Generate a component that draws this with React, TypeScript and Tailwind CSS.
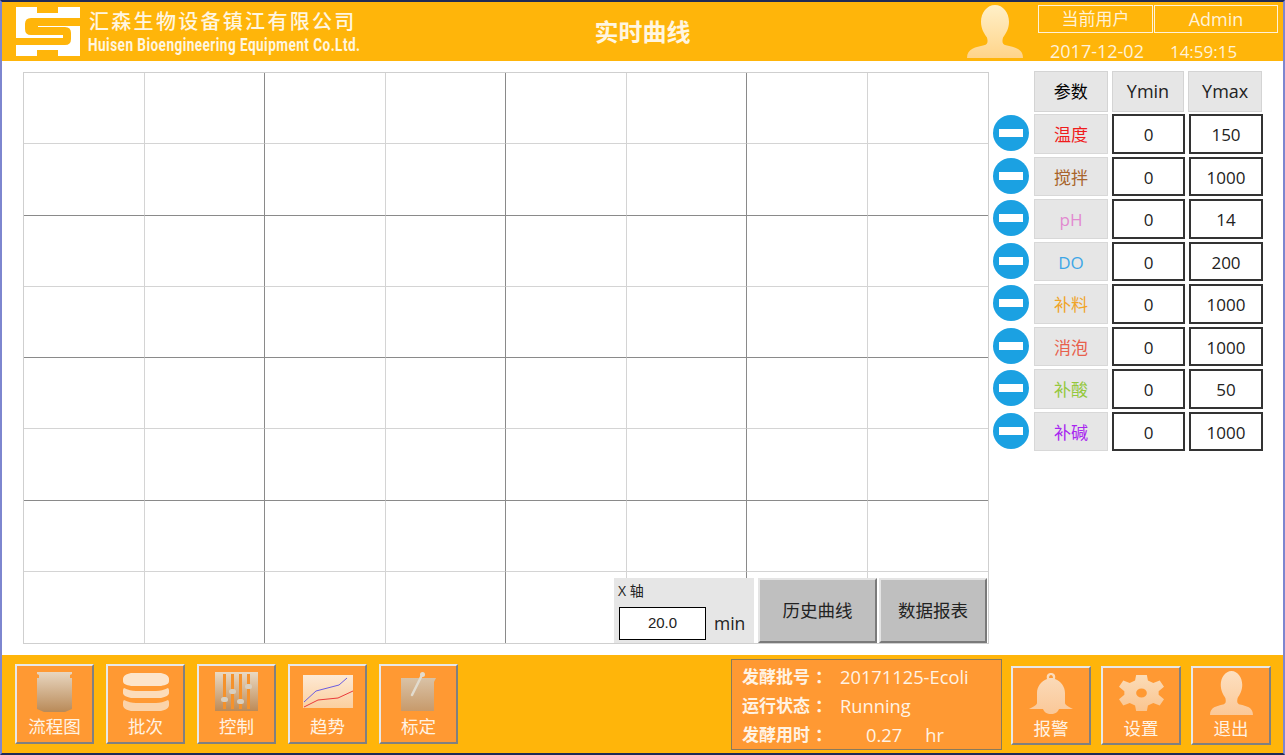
import React from 'react';

const cjk = '"Open Sans","Noto Sans CJK SC",sans-serif';

const params = [
  { name: '温度', color: 'text-[#f01c1c]', ymax: '150' },
  { name: '搅拌', color: 'text-[#a8642a]', ymax: '1000' },
  { name: 'pH', color: 'text-[#e28ad0]', ymax: '14' },
  { name: 'DO', color: 'text-[#3ea6e6]', ymax: '200' },
  { name: '补料', color: 'text-[#f0a428]', ymax: '1000' },
  { name: '消泡', color: 'text-[#e8604c]', ymax: '1000' },
  { name: '补酸', color: 'text-[#94c83c]', ymax: '50' },
  { name: '补碱', color: 'text-[#a824f0]', ymax: '1000' },
];

const MinusIcon = () => (
  <svg width="36" height="36" viewBox="0 0 36 36">
    <circle cx="18" cy="18" r="18" fill="#1ba1e2" />
    <rect x="6" y="14" width="24" height="8" fill="#fff" />
  </svg>
);

const Grad = ({ id, from, to }: { id: string; from: string; to: string }) => (
  <linearGradient id={id} x1="0" y1="0" x2="0" y2="1">
    <stop offset="0" stopColor={from} />
    <stop offset="1" stopColor={to} />
  </linearGradient>
);

const Logo = () => (
  <svg width="64" height="49" viewBox="0 0 64 49" className="shrink-0">
    <path fill="#fff" d="M0 0h21v6h21V0h22v49H42v-6H21v6H0Z" />
    <path
      fill="#ffb50a"
      d="M64 11H15q-6 0-6 6v5q0 6 6 6h32v3H0v7h49q6 0 6-6v-6q0-6-6-6H22v-1h42Z"
    />
  </svg>
);

const UserIcon = ({ id, w, h, from, to }: { id: string; w: number; h: number; from: string; to: string }) => (
  <svg width={w} height={h} viewBox="0 0 56 54" preserveAspectRatio="none">
    <defs>
      <Grad id={id} from={from} to={to} />
    </defs>
    <path
      d="M28 0C20 0 14 8 14 17c0 7 3 12 6 16 1 4 1 7-3 8-8 2-17 3-17 13h56c0-10-9-11-17-13-4-1-4-4-3-8 3-4 6-9 6-16C42 8 36 0 28 0Z"
      fill={`url(#${id})`}
    />
  </svg>
);

const TankIcon = () => (
  <svg width="35" height="40" viewBox="0 0 35 40">
    <defs>
      <Grad id="tank" from="#e8d6c0" to="#b98a58" />
    </defs>
    <path d="M0 0h35v2l-2 1v3h2v31l-7 3H7l-7-3V6h2V3L0 2Z" fill="url(#tank)" />
  </svg>
);

const StackIcon = () => (
  <svg width="46" height="38" viewBox="0 0 46 38">
    <path d="M8 0h30c5 1 8 3 8 6v2c0 3-3 4-8 5H8c-5-1-8-2-8-5V6c0-3 3-5 8-6Z" fill="#fde5cb" />
    <path d="M1 15c4 2 8 3 12 3h20c4 0 8-1 12-3 1 1 1 2 1 3v2c0 2-3 4-8 5H8c-5-1-8-3-8-5v-2c0-1 0-2 1-3Z" fill="#fcdcba" />
    <path d="M1 27c4 2 8 3 12 3h20c4 0 8-1 12-3 1 1 1 2 1 3v2c0 3-3 5-8 6H8c-5-1-8-3-8-6v-2c0-1 0-2 1-3Z" fill="#fbd3a9" />
  </svg>
);

const SliderIcon = () => (
  <svg width="43" height="39" viewBox="0 0 43 39">
    <defs>
      <Grad id="sld" from="#ead9c3" to="#bd8a56" />
    </defs>
    <rect width="43" height="39" fill="url(#sld)" />
    {[8, 16, 24, 32].map((x) => (
      <rect key={x} x={x} y="2" width="3" height="35" fill="#f5922c" />
    ))}
    <rect x="6" y="25" width="7" height="5" rx="2.5" fill="#d8cfc0" />
    <rect x="14" y="17" width="7" height="5" rx="2.5" fill="#d8cfc0" />
    <rect x="22" y="27" width="7" height="5" rx="2.5" fill="#d8cfc0" />
    <rect x="30" y="12" width="7" height="5" rx="2.5" fill="#d8cfc0" />
  </svg>
);

const ChartIcon = () => (
  <svg width="50" height="33" viewBox="0 0 50 33">
    <defs>
      <Grad id="cht" from="#fde9d4" to="#fbcf9f" />
    </defs>
    <rect width="50" height="33" fill="url(#cht)" />
    <path d="M1 27 13 16l23-6 8-7" fill="none" stroke="#6a5ce0" strokeWidth="1" />
    <path d="M1 32l14-7 20-2 15-7" fill="none" stroke="#ea3a3a" strokeWidth="1" />
  </svg>
);

const BeakerIcon = () => (
  <svg width="35" height="39" viewBox="0 0 35 39">
    <defs>
      <Grad id="bkr" from="#d9c2a6" to="#c79a6b" />
    </defs>
    <path d="M0 6h35l-2 4v29H0Z" fill="url(#bkr)" />
    <path d="M21 3 11 23" stroke="#e2dccf" strokeWidth="2.5" strokeLinecap="round" />
    <circle cx="21.5" cy="2.5" r="2.5" fill="#e2dccf" />
  </svg>
);

const BellIcon = () => (
  <svg width="44" height="41" viewBox="0 0 44 41">
    <defs>
      <Grad id="bell" from="#fbdcbc" to="#fac898" />
    </defs>
    <path
      fill="url(#bell)"
      fillRule="evenodd"
      d="M22 0c-3 0-5 2-4 6-6 2-10 8-10 14v10c0 2-4 4-8 6h14c1 3 4 5 8 5s7-2 8-5h14c-4-2-8-4-8-6V20c0-6-4-12-10-14 1-4-1-6-4-6Zm0 2c1 0 2 1 2 3h-4c0-2 1-3 2-3Z"
    />
  </svg>
);

const GearIcon = () => (
  <svg width="45" height="36" viewBox="0 0 42 40" preserveAspectRatio="none">
    <defs>
      <Grad id="gear" from="#fbdcb8" to="#fac590" />
    </defs>
    <path
      fillRule="evenodd"
      fill="url(#gear)"
      d="M16 0h10l1 6 5 3 6-3 4 7-5 5v4l5 5-4 7-6-3-5 3-1 6H16l-1-6-5-3-6 3-4-7 5-5v-4L0 13l4-7 6 3 5-3ZM21 15a5 5 0 1 0 0 10 5 5 0 0 0 0-10Z"
    />
  </svg>
);

const NavButton = ({ label, children, right }: { label: string; children: React.ReactNode; right?: boolean }) => (
  <button
    className={`flex flex-col items-center border-2 border-t-[#e8e8e8] border-l-[#e8e8e8] border-r-[#808080] border-b-[#808080] bg-[#ff9933] text-[17.5px] leading-[22px] text-[#fff3e4] ${right ? 'h-[79px] w-[80px]' : 'h-[80px] w-[79px]'}`}
  >
    <div className="flex h-[51px] shrink-0 items-center justify-center">{children}</div>
    <span className="mt-[-2px]">{label}</span>
  </button>
);

const major = [2, 4, 6];

const ChartGrid = () => (
  <div className="relative h-[572px] w-[966px] border border-[#cfcfcf] bg-white">
    <div className="grid h-full w-full grid-cols-8 grid-rows-8">
      {Array.from({ length: 64 }).map((_, i) => {
        const col = i % 8;
        const row = Math.floor(i / 8);
        return (
          <div
            key={i}
            className={`${col < 7 ? 'border-r' : ''} ${row < 7 ? 'border-b' : ''} ${major.includes(col + 1) ? 'border-r-[#8a8a8a]' : 'border-r-[#d4d4d4]'} ${major.includes(row + 1) ? 'border-b-[#8a8a8a]' : 'border-b-[#d4d4d4]'}`}
          />
        );
      })}
    </div>
    {/* axis box and buttons sit over the last row */}
    <div className="absolute bottom-0 right-[1px] flex h-[65px] items-stretch gap-[3px]">
      <div className="mr-[1px] w-[140px] bg-[#e6e6e6] pl-[5px] pt-[3px] text-[#222]">
        <div className="ml-[-1px] text-[14px] leading-[20px]">X 轴</div>
        <div className="mt-[6px] flex items-center gap-[8px]">
          <div className="flex h-[33px] w-[87px] items-center justify-center border border-black bg-white text-[15px] font-['Liberation_Sans',sans-serif]">
            20.0
          </div>
          <span className="text-[17.5px]">min</span>
        </div>
      </div>
      <button className="w-[119px] border-2 border-t-[#e4e4e4] border-l-[#e4e4e4] border-r-[#7a7a7a] border-b-[#7a7a7a] bg-[#bfbfbf] pb-[1px] text-[17.5px] text-[#222]">
        历史曲线
      </button>
      <button className="ml-[-1px] w-[108px] border-2 border-t-[#e4e4e4] border-l-[#e4e4e4] border-r-[#7a7a7a] border-b-[#7a7a7a] bg-[#bfbfbf] pb-[1px] text-[17.5px] text-[#222]">
        数据报表
      </button>
    </div>
  </div>
);

const ParamTable = () => (
  <div className="mt-[-1px] flex w-[273px] flex-col">
    <div className="ml-[45px] flex h-[41px] gap-[4px] text-[#222]">
      <div className="flex w-[74px] items-center justify-center border border-[#d4d4d4] bg-[#e6e6e6] text-[17px] text-black">参数</div>
      <div className="flex w-[73px] items-center justify-center border border-[#d4d4d4] bg-[#e6e6e6] text-[18px]">Ymin</div>
      <div className="flex w-[74px] items-center justify-center border border-[#d4d4d4] bg-[#e6e6e6] text-[18px]">Ymax</div>
    </div>
    <div className="mt-[2px] flex flex-col gap-[3px]">
      {params.map((p) => (
        <div key={p.name} className="flex h-[39.5px] items-center">
          <div className="ml-[4px] mt-[-1px] flex w-[41px] shrink-0 justify-start">
            <MinusIcon />
          </div>
          <div className="flex h-full gap-[4px] text-[17px] text-[#222]">
            <div className={`flex w-[74px] items-center justify-center border border-[#d8d8d8] bg-[#e6e6e6] pt-[2px] ${p.color}`}>
              {p.name}
            </div>
            <div className="flex w-[73px] items-center justify-center border-2 border-[#333] bg-white pt-[2px]">0</div>
            <div className="flex w-[74px] items-center justify-center border-2 border-[#333] bg-white pt-[2px]">{p.ymax}</div>
          </div>
        </div>
      ))}
    </div>
  </div>
);

const App: React.FC = () => {
  return (
    <div
      className="flex h-[755px] w-[1285px] flex-col overflow-hidden border-x-2 border-x-[#7d86cf] border-t-2 border-t-[#1f2a55] border-b-2 border-b-[#1f2a55] bg-white"
      style={{ fontFamily: cjk }}
    >
      {/* header */}
      <header className="flex h-[59px] shrink-0 items-center bg-[#ffb50a] text-white">
        <div className="ml-[14px] flex w-[346px] items-center gap-[9px]">
          <Logo />
          <div className="leading-none">
            <div className="mt-[2px] text-[20px] font-medium leading-[24px] tracking-[2.3px] text-[#fff6e0]">汇森生物设备镇江有限公司</div>
            <div className="mt-[1px] h-[20px] w-[270px] whitespace-nowrap">
              <span className="ml-[-1px] inline-block origin-left scale-x-[0.755] font-['Roboto',sans-serif] text-[18px] font-bold leading-[20px] tracking-[0.6px] text-[#fff6e0]">
                Huisen Bioengineering Equipment Co.Ltd.
              </span>
            </div>
          </div>
        </div>
        <div className="flex-1 pr-[44px] text-center text-[24px] font-semibold text-[#fff6e0]">实时曲线</div>
        <div className="mr-[15px]">
          <UserIcon id="hdr" w={56} h={53} from="#fff0c8" to="#ffd48a" />
        </div>
        <div className="mr-[5px] flex w-[240px] flex-col self-start pt-[3px]">
          <div className="flex h-[28px] gap-[1px]">
            <div className="flex w-[115px] items-center justify-center border border-[#fff2d8] text-[17px] text-[#fff2d8]">当前用户</div>
            <div className="flex w-[124px] items-center justify-center border border-[#fff2d8] text-[18px] text-[#fff2d8]">Admin</div>
          </div>
          <div className="mt-[8px] whitespace-nowrap pl-[12px] text-[18px] leading-[20px] text-[#fff2d8]">
            2017-12-02<span className="ml-[26px] text-[17px]">14:59:15</span>
          </div>
        </div>
      </header>

      {/* chart and parameter table */}
      <main className="flex flex-1 items-start pl-[21px] pr-[20px] pt-[11px]">
        <ChartGrid />
        <ParamTable />
      </main>

      {/* bottom bar */}
      <footer className="flex h-[98px] shrink-0 items-center bg-[#ffb50a] pl-[13px] pr-[12px]">
        <div className="flex gap-[12px]">
          <NavButton label="流程图"><TankIcon /></NavButton>
          <NavButton label="批次"><StackIcon /></NavButton>
          <NavButton label="控制"><SliderIcon /></NavButton>
          <NavButton label="趋势"><ChartIcon /></NavButton>
          <NavButton label="标定"><BeakerIcon /></NavButton>
        </div>
        <div className="ml-auto mr-[9px] flex h-[91px] w-[271px] flex-col justify-center gap-[5px] border border-[#8a7a5a] bg-[#ff9933] pl-[10px] pt-[4px] text-[18.3px] leading-[24px] text-[#fff3e4]">
          <div className="flex"><span className="w-[98px] text-[17px] font-bold">发酵批号<span className="ml-[5px]">：</span></span>20171125-Ecoli</div>
          <div className="flex"><span className="w-[98px] text-[17px] font-bold">运行状态<span className="ml-[5px]">：</span></span>Running</div>
          <div className="flex"><span className="w-[98px] text-[17px] font-bold">发酵用时<span className="ml-[5px]">：</span></span><span className="ml-[26px]">0.27</span><span className="ml-[23px]">hr</span></div>
        </div>
        <div className="mt-[2px] flex gap-[10px]">
          <NavButton right label="报警"><BellIcon /></NavButton>
          <NavButton right label="设置"><GearIcon /></NavButton>
          <NavButton right label="退出"><UserIcon id="ftr" w={43} h={44} from="#fde0c0" to="#fbc898" /></NavButton>
        </div>
      </footer>
    </div>
  );
};

export default App;
